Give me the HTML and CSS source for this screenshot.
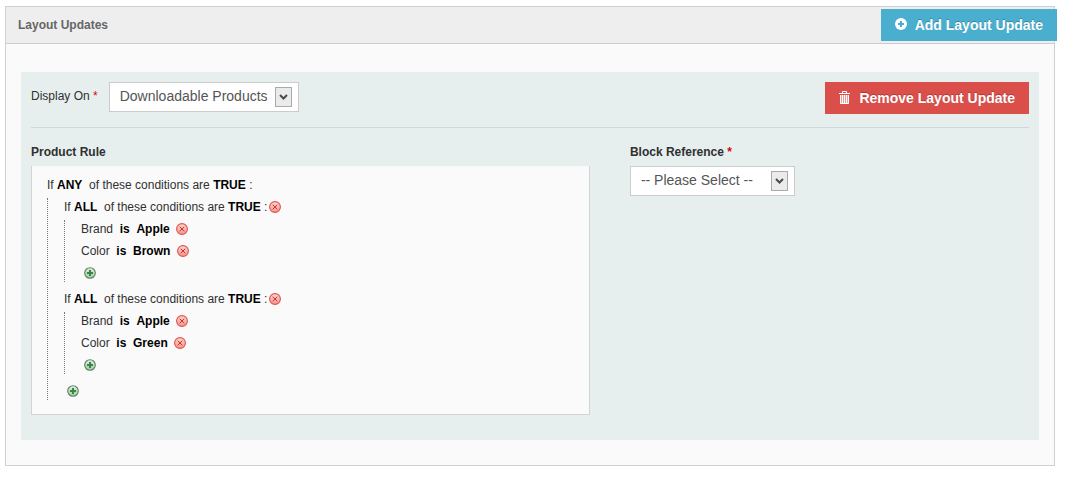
FILE: index.html
```
<!DOCTYPE html>
<html lang="en">
<head>
    <meta charset="UTF-8">
    <meta name="viewport" content="width=device-width, initial-scale=1.0">
    <title>Layout Updates</title>
    <link rel="stylesheet" href="styles.css">
</head>
<body>
    <!-- Icons shared by the rule rows -->
    <svg class="icon-defs" aria-hidden="true">
        <defs>
            <linearGradient id="red-fill" x1="0" y1="0" x2="0" y2="1">
                <stop offset="0" stop-color="#fcd6d2"/>
                <stop offset="1" stop-color="#f4968e"/>
            </linearGradient>
            <linearGradient id="green-fill" x1="0" y1="0" x2="0" y2="1">
                <stop offset="0" stop-color="#e4efe2"/>
                <stop offset="1" stop-color="#a4cba0"/>
            </linearGradient>
            <symbol id="icon-remove" viewBox="0 0 12 12">
                <circle cx="6" cy="6" r="5.4" fill="url(#red-fill)" stroke="#e0524a" stroke-width="1.1"/>
                <path d="M3.7 3.7l4.6 4.6M8.3 3.7l-4.6 4.6" stroke="#d0342c" stroke-width="1"/>
            </symbol>
            <symbol id="icon-add" viewBox="0 0 12 12">
                <circle cx="6" cy="6" r="5.3" fill="url(#green-fill)" stroke="#5f7f62" stroke-width="1.1"/>
                <path d="M6 3v6M3 6h6" stroke="#2f8a45" stroke-width="2"/>
            </symbol>
            <symbol id="icon-arrow" viewBox="0 0 15 18">
                <path d="M4 7l3.500 3.500L11 7" fill="none" stroke="#4a4a4a" stroke-width="2"/>
            </symbol>
        </defs>
    </svg>

    <section class="panel">
        <header class="panel-header">
            <h1>Layout Updates</h1>
            <button type="button" class="btn btn-add">
                <svg width="12" height="14" viewBox="0 0 12 14" aria-hidden="true">
                    <circle cx="6" cy="6" r="6" fill="#fff"/>
                    <path d="M6 3v6M3 6h6" stroke="#4aafcf" stroke-width="2"/>
                </svg>
                Add Layout Update
            </button>
        </header>

        <div class="panel-body">
            <div class="update">
                <div class="update-top">
                    <label for="display-on">Display On <span class="required">*</span></label>
                    <div class="select-box">
                        <select id="display-on">
                            <option>Downloadable Products</option>
                        </select>
                        <svg class="select-arrow" aria-hidden="true"><use href="#icon-arrow"/></svg>
                    </div>
                    <button type="button" class="btn btn-remove">
                        <svg width="12" height="14" viewBox="0 0 12 14" aria-hidden="true">
                            <path d="M3.500 2V.5h4V2" fill="none" stroke="#fff"/>
                            <path d="M0 2h11v1H0z" fill="#fff"/>
                            <path d="M1 4h9v9H1z" fill="#ee9f9c"/>
                            <path d="M1.500 4v8.500h8V4M3.500 4v8M5.500 4v8M7.500 4v8" fill="none" stroke="#fff"/>
                        </svg>
                        Remove Layout Update
                    </button>
                </div>

                <div class="update-columns">
                    <div>
                        <h2>Product Rule</h2>
                        <div class="rule-box">
                            <div class="rule rule-group">If <a href="#">ANY</a> <span>&nbsp;of these conditions are</span> <a href="#">TRUE</a> :</div>
                            <ul class="rules rules-outer">
                                <li>
                                    <div class="rule rule-group">If <a href="#">ALL</a> <span>&nbsp;of these conditions are</span> <a href="#">TRUE</a> :<button type="button" class="icon-btn" aria-label="Remove"><svg><use href="#icon-remove"/></svg></button></div>
                                    <ul class="rules">
                                        <li class="rule">Brand&nbsp; <a href="#">is</a>&nbsp; <a href="#">Apple</a>&nbsp;
                                            <button type="button" class="icon-btn" aria-label="Remove"><svg><use href="#icon-remove"/></svg></button></li>
                                        <li class="rule">Color&nbsp; <a href="#">is</a>&nbsp; <a href="#">Brown</a>&nbsp;
                                            <button type="button" class="icon-btn" aria-label="Remove"><svg><use href="#icon-remove"/></svg></button></li>
                                        <li class="rule rule-add"><button type="button" class="icon-btn" aria-label="Add"><svg><use href="#icon-add"/></svg></button></li>
                                    </ul>
                                </li>
                                <li>
                                    <div class="rule rule-group">If <a href="#">ALL</a> <span>&nbsp;of these conditions are</span> <a href="#">TRUE</a> :<button type="button" class="icon-btn" aria-label="Remove"><svg><use href="#icon-remove"/></svg></button></div>
                                    <ul class="rules">
                                        <li class="rule">Brand&nbsp; <a href="#">is</a>&nbsp; <a href="#">Apple</a>&nbsp;
                                            <button type="button" class="icon-btn" aria-label="Remove"><svg><use href="#icon-remove"/></svg></button></li>
                                        <li class="rule">Color&nbsp; <a href="#">is</a>&nbsp; <a href="#">Green</a>&nbsp;
                                            <button type="button" class="icon-btn" aria-label="Remove"><svg><use href="#icon-remove"/></svg></button></li>
                                        <li class="rule rule-add"><button type="button" class="icon-btn" aria-label="Add"><svg><use href="#icon-add"/></svg></button></li>
                                    </ul>
                                </li>
                                <li class="rule rule-add"><button type="button" class="icon-btn" aria-label="Add"><svg><use href="#icon-add"/></svg></button></li>
                            </ul>
                        </div>
                    </div>

                    <div>
                        <label class="block-label" for="block-reference">Block Reference <span class="required">*</span></label>
                        <div class="select-box">
                            <select id="block-reference">
                                <option>-- Please Select --</option>
                            </select>
                            <svg class="select-arrow" aria-hidden="true"><use href="#icon-arrow"/></svg>
                        </div>
                    </div>
                </div>
            </div>
        </div>
    </section>
</body>
</html>
```
FILE: styles.css
```
* {
    box-sizing: border-box;
}
body {
    margin: 0;
    padding: 6px 11px 11px 5px;
    font-family: "Liberation Sans", Arial, sans-serif;
    font-size: 12px;
    line-height: 16px;
    color: #303030;
    background-color: #fff;
}
.icon-defs {
    position: absolute;
    width: 0;
    height: 0;
}
.panel {
    border: 1px solid #d0d0d0;
    background-color: #fafafa;
}
.panel-header {
    display: flex;
    align-items: center;
    justify-content: space-between;
    height: 37px;
    padding-left: 12px;
    background-color: #eee;
    border-bottom: 1px solid #ccc;
}
.panel-header h1 {
    margin: 0;
    font-size: 12px;
    color: #666;
}
.btn {
    display: flex;
    align-items: center;
    gap: 8px;
    height: 32px;
    padding: 0 14px;
    border: none;
    font-family: inherit;
    font-size: 14px;
    font-weight: bold;
    color: #fff;
    text-shadow: 0 -1px 0 rgba(0, 0, 0, 0.25);
    white-space: nowrap;
    cursor: pointer;
}
.btn-add {
    margin-right: -3px;
    background-color: #4aafcf;
}
.btn-remove {
    margin-left: auto;
    background-color: #da4f49;
}
.panel-body {
    padding: 28px 15px 25px;
}
.update {
    padding: 10px 10px 25px;
    background-color: #e6efee;
}
.update-top {
    display: flex;
    align-items: flex-start;
    height: 46px;
    border-bottom: 1px solid #c9dcd9;
}
.update-top label {
    line-height: 28px;
}
.required {
    color: #d40707;
}
.update-top .select-box {
    margin-left: 11px;
}
.select-box {
    display: inline-grid;
    align-items: center;
    justify-items: end;
    min-width: 165px;
}
.select-box select {
    grid-area: 1 / 1;
    appearance: none;
    width: 100%;
    height: 30px;
    margin: 0;
    padding: 0 30px 2px 10px;
    border: 1px solid #ccc;
    border-radius: 0;
    background-color: #fff;
    font-family: inherit;
    font-size: 14px;
    color: #555;
}
.select-arrow {
    grid-area: 1 / 1;
    width: 17px;
    height: 20px;
    margin-right: 7px;
    border: 1px solid #aaa;
    background-color: #ebebeb;
    pointer-events: none;
}
.update-columns {
    display: grid;
    grid-template-columns: 56% 1fr;
    column-gap: 40px;
    padding-top: 16px;
}
.update-columns h2,
.block-label {
    display: block;
    margin: 0 0 6px;
    font-size: 12px;
    font-weight: bold;
}
.rule-box {
    padding: 11px 15px 14px;
    border: 1px solid #d3d3d3;
    border-top: none;
    background-color: #fafafa;
}
.rule {
    display: block;
    height: 16px;
    white-space: nowrap;
}
.rule a {
    font-weight: bold;
    color: #000;
    text-decoration: none;
}
.rules {
    display: flex;
    flex-direction: column;
    gap: 6px;
    margin: 5px 0 0;
    padding: 1px 0 1px 16px;
    border-left: 1px dotted #777;
    list-style-type: none;
}
.rules-outer {
    gap: 9px;
}
.rule-add {
    padding-left: 3px;
}
.icon-btn {
    width: 12px;
    height: 12px;
    padding: 0;
    border: none;
    background: none;
    vertical-align: -2px;
    cursor: pointer;
}
.rule-group .icon-btn {
    margin-left: 2px;
}
.icon-btn svg {
    display: block;
    width: 12px;
    height: 12px;
}
```
